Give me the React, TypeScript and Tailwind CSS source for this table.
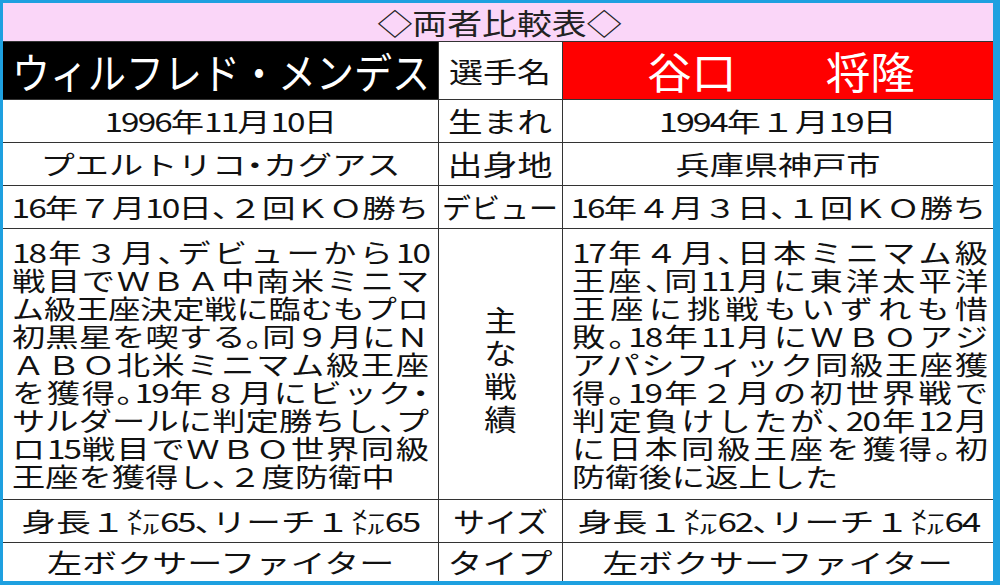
import React, { useLayoutEffect, useRef, useState } from "react";

function fmt(text: string): React.ReactNode[] {
  return text.split(/([0-9]+)/).map((part, i) =>
    /^[0-9]+$/.test(part) ? (
      <span key={i} className="tracking-[-1.5px]">
        {part}
      </span>
    ) : (
      <React.Fragment key={i}>{part}</React.Fragment>
    )
  );
}

function Fit({
  text,
  w,
  cls = "",
  plain = false,
}: {
  text: string;
  w: number;
  cls?: string;
  plain?: boolean;
}) {
  const ref = useRef<HTMLSpanElement>(null);
  const [s, setS] = useState(1.25);
  useLayoutEffect(() => {
    const el = ref.current;
    if (!el) return;
    const m = () => {
      const n = el.offsetWidth;
      if (n) setS(w / n);
    };
    m();
    if (document.fonts) document.fonts.ready.then(m);
  }, [w]);
  return (
    <span
      ref={ref}
      className={"inline-block whitespace-nowrap " + cls}
      style={{ transform: `scaleX(${s})` }}
    >
      {plain ? text : fmt(text)}
    </span>
  );
}

function Line({ text, t, last }: { text: string; t: number; last: boolean }) {
  const ref = useRef<HTMLSpanElement>(null);
  const [st, setSt] = useState<{ s: number; w: number } | null>(null);
  useLayoutEffect(() => {
    const el = ref.current;
    if (!el || st) return;
    const n = el.offsetWidth;
    const base = 1.28;
    if (n * base > t) setSt({ s: t / n, w: n });
    else setSt({ s: base, w: t / base });
  }, [st, t]);
  if (!st) {
    return (
      <div className="h-[28px] whitespace-nowrap">
        <span ref={ref} className="inline-block">
          {fmt(text)}
        </span>
      </div>
    );
  }
  return (
    <div
      className={
        last
          ? "h-[28px] origin-left whitespace-nowrap"
          : "h-[28px] origin-left whitespace-nowrap text-justify [text-align-last:justify]"
      }
      style={{ width: st.w, transform: `scaleX(${st.s})` }}
    >
      {fmt(text)}
    </div>
  );
}

function Para({ lines, t }: { lines: string[]; t: number }) {
  return (
    <div className="flex flex-col text-[26px] leading-[28px] [font-feature-settings:'halt']">
      {lines.map((l, i) => (
        <Line key={i} text={l} t={t} last={i === lines.length - 1} />
      ))}
    </div>
  );
}

function Cell({ children, cls }: { children: React.ReactNode; cls: string }) {
  return <div className={"flex items-center overflow-hidden " + cls}>{children}</div>;
}

const left = [
  "18年３月、デビューから10",
  "戦目でＷＢＡ中南米ミニマ",
  "ム級王座決定戦に臨むもプロ",
  "初黒星を喫する。同９月にＮ",
  "ＡＢＯ北米ミニマム級王座",
  "を獲得。19年８月にビック・",
  "サルダールに判定勝ちし、プ",
  "ロ15戦目でＷＢＯ世界同級",
  "王座を獲得し、２度防衛中",
];

const right = [
  "17年４月、日本ミニマム級",
  "王座、同11月に東洋太平洋",
  "王座に挑戦もいずれも惜",
  "敗。18年11月にＷＢＯアジ",
  "アパシフィック同級王座獲",
  "得。19年２月の初世界戦で",
  "判定負けしたが、20年12月",
  "に日本同級王座を獲得。初",
  "防衛後に返上した",
];

const body = "text-[26px] [font-feature-settings:'halt']";
const label = "text-[28px]";
const W = "justify-center bg-white";

export default function App() {
  return (
    <div className="w-[1000px] h-[585px] bg-[#1ea0e0] pl-[3px] pt-[3px] pr-[7px] pb-[4px] font-['Noto_Sans_CJK_JP',sans-serif] font-normal text-[#111] leading-none">
      <div className="grid h-full grid-cols-[435px_123px_430px] grid-rows-[38px_57px_42px_42px_42px_270px_42px_38px] gap-px bg-[#333]">
        <div className="col-span-3 flex items-center justify-center bg-[#fad6f8] pl-[4px]">
          <Fit text="◇両者比較表◇" w={244} cls="text-[29px] text-[#222]" plain />
        </div>

        <Cell cls="justify-start bg-black pl-[9px] text-white">
          <Fit text="ウィルフレド・メンデス" w={418} cls="origin-left text-[42px]" plain />
        </Cell>
        <Cell cls={W}>
          <Fit text="選手名" w={102} cls={label} />
        </Cell>
        <Cell cls="justify-center bg-[#ff0000] pl-[6px] text-white">
          <Fit text="谷口　　将隆" w={268} cls="text-[43px]" plain />
        </Cell>

        <Cell cls={W}>
          <Fit text="1996年11月10日" w={233} cls={body} />
        </Cell>
        <Cell cls={W}>
          <Fit text="生まれ" w={104} cls={label} />
        </Cell>
        <Cell cls={W}>
          <Fit text="1994年１月19日" w={238} cls={body} />
        </Cell>

        <Cell cls={W}>
          <Fit text="プエルトリコ・カグアス" w={360} cls={body} />
        </Cell>
        <Cell cls={W}>
          <Fit text="出身地" w={105} cls={label} />
        </Cell>
        <Cell cls={W}>
          <Fit text="兵庫県神戸市" w={205} cls={body} />
        </Cell>

        <Cell cls={W}>
          <Fit text="16年７月10日、２回ＫＯ勝ち" w={418} cls={body} />
        </Cell>
        <Cell cls={W}>
          <Fit text="デビュー" w={116} cls={label} />
        </Cell>
        <Cell cls={W}>
          <Fit text="16年４月３日、１回ＫＯ勝ち" w={416} cls={body} />
        </Cell>

        <div className="flex items-center bg-white pl-[9px]">
          <Para lines={left} t={417} />
        </div>
        <div className="flex flex-col items-center justify-center bg-white pt-[10px]">
          {["主", "な", "戦", "績"].map((c) => (
            <span key={c} className="inline-block scale-x-[1.12] text-[29px] leading-[33px]">
              {c}
            </span>
          ))}
        </div>
        <div className="flex items-center bg-white pl-[9px]">
          <Para lines={right} t={416} />
        </div>

        <Cell cls={W}>
          <Fit text="身長１㍍65、リーチ１㍍65" w={398} cls={body} />
        </Cell>
        <Cell cls={W}>
          <Fit text="サイズ" w={95} cls={label} />
        </Cell>
        <Cell cls={W}>
          <Fit text="身長１㍍62、リーチ１㍍64" w={402} cls={body} />
        </Cell>

        <Cell cls={W}>
          <Fit text="左ボクサーファイター" w={347} cls={body} />
        </Cell>
        <Cell cls={W}>
          <Fit text="タイプ" w={105} cls={label} />
        </Cell>
        <Cell cls={W}>
          <Fit text="左ボクサーファイター" w={350} cls={body} />
        </Cell>
      </div>
    </div>
  );
}
